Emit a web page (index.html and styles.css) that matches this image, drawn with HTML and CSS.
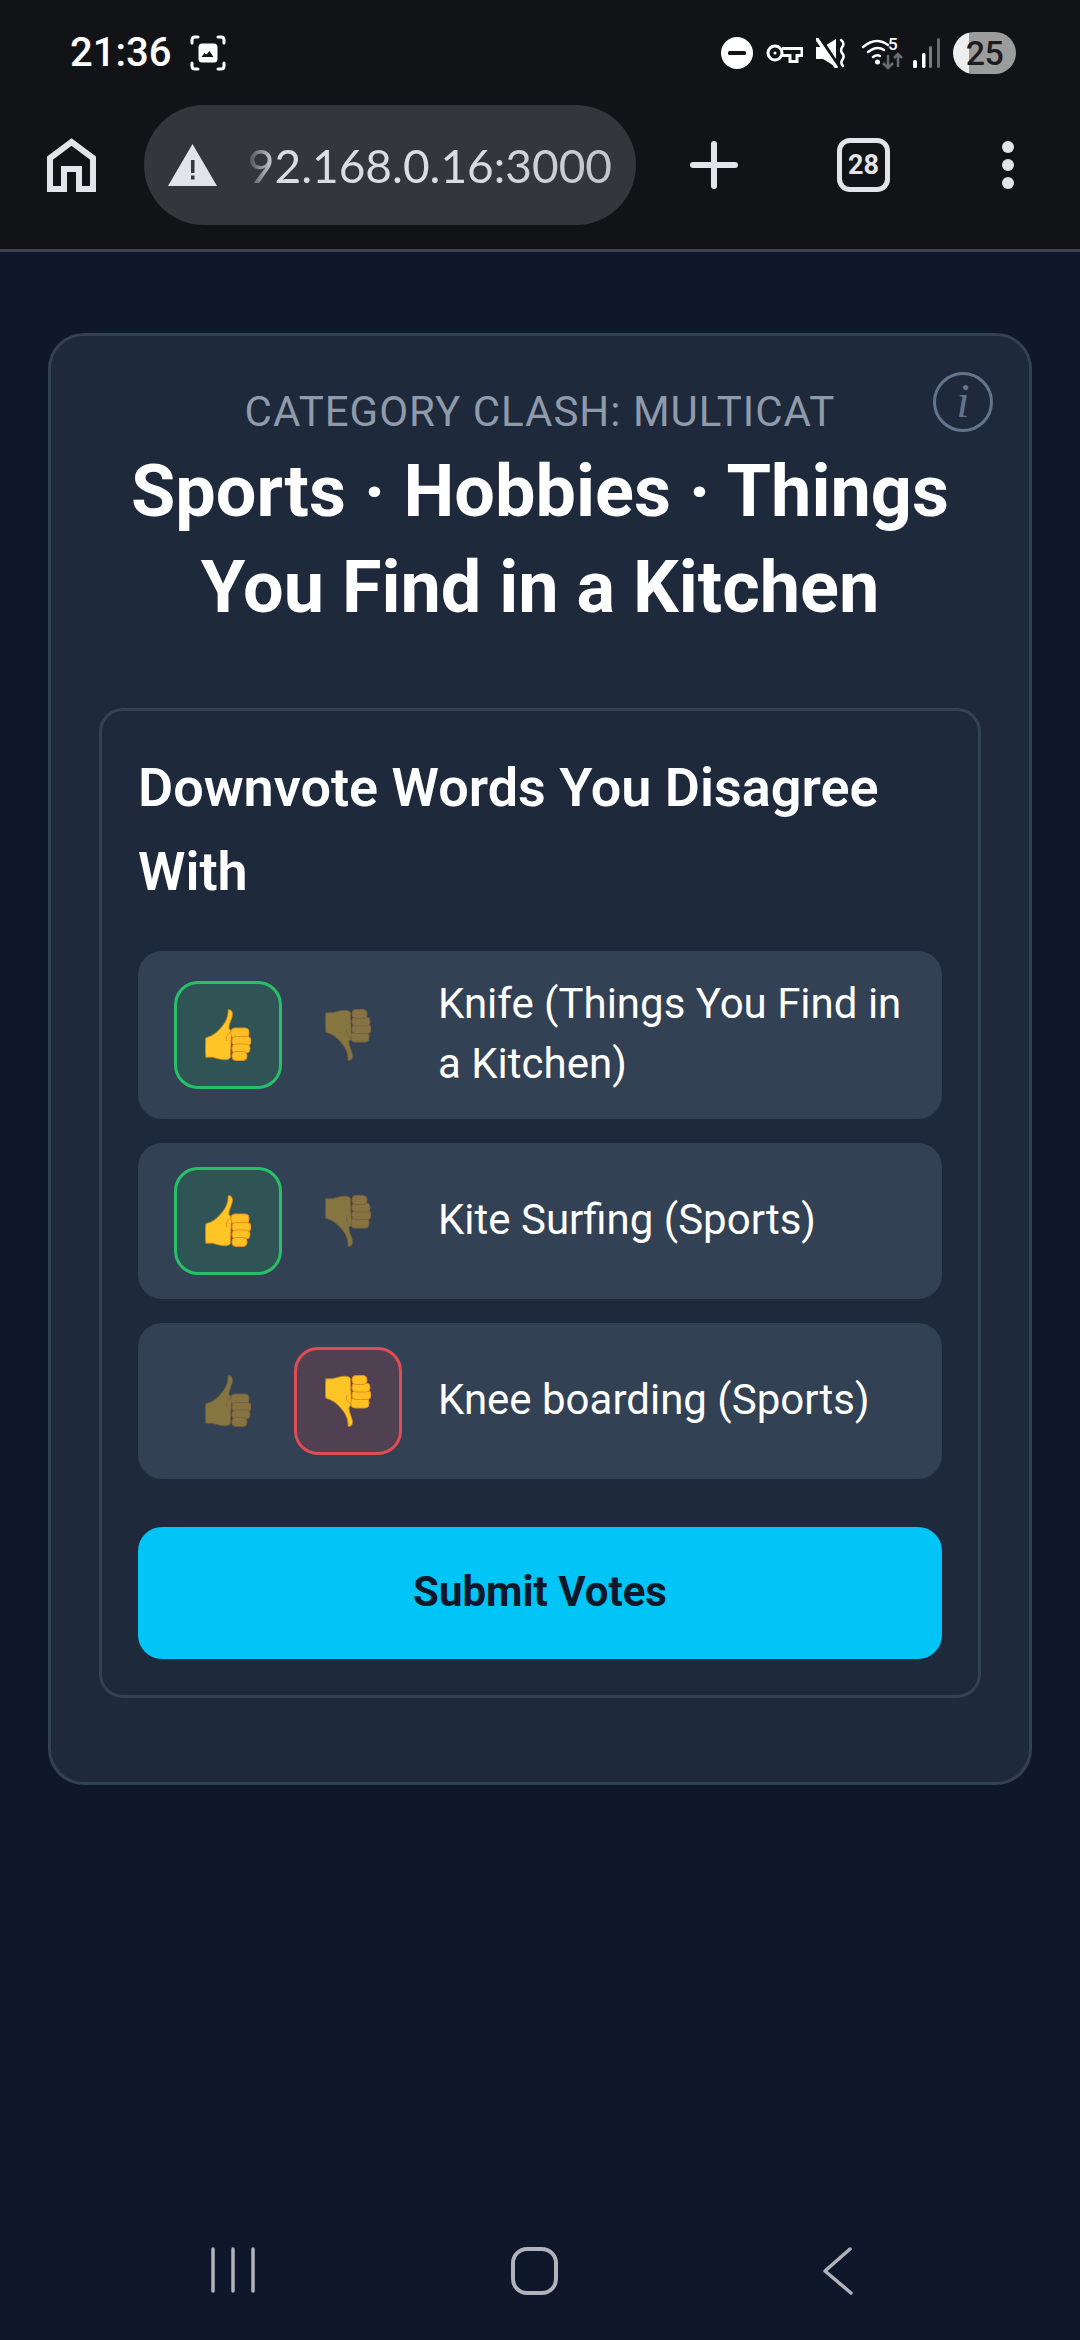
FILE: index.html
```html
<!DOCTYPE html>
<html lang="en">

<head>
    <meta charset="UTF-8" />
    <meta name="viewport" content="width=device-width, initial-scale=1.0" />
    <title>Category Clash</title>
    <link rel="stylesheet" href="styles.css">
</head>

<body>
    <svg class="defs" width="0" height="0">
        <defs>
            <symbol id="thumb" viewBox="0 0 46 52">
                <path d="M23 .8c3-.8 4.800 1.700 4.500 5-.3 3.700-3 7.600-3.500 12.200-.2 2 .5 3 2.500 3.500l-1 27c-1 1.600-3 2.300-5 2.300-5 0-11-2-13-2.500H.8C.3 44 .3 34 .8 28.800 8 27 12.500 23 16.500 18 21 13 23.500 7 23 .8z" fill="#ffc425" stroke="#c9801a" stroke-width=".8" />
                <path d="M26 22c-3 3-6 6-4 10" fill="none" stroke="#e0901c" stroke-width="1" />
                <rect x="26" y="19" width="18" height="10" rx="4" fill="#ffc024" stroke="#e58f1d" stroke-width="1" />
                <rect x="27" y="27.500" width="19" height="9" rx="4" fill="#ffc024" stroke="#e58f1d" stroke-width="1" />
                <rect x="27" y="35" width="18" height="9" rx="4" fill="#ffc024" stroke="#e58f1d" stroke-width="1" />
                <rect x="27" y="42.500" width="15" height="9" rx="4" fill="#ffc024" stroke="#e58f1d" stroke-width="1" />
            </symbol>
        </defs>
    </svg>

    <header class="chrome">
        <div class="statusbar">
            <span class="clock">21:36</span>
            <svg class="shot-icon" width="36" height="36" viewBox="0 0 36 36" fill="none" stroke="#fff" stroke-width="3" stroke-linecap="round">
                <path d="M2 8V5q0-3 3-3h3M28 2h3q3 0 3 3v3M34 28v3q0 3-3 3h-3M8 34H5q-3 0-3-3v-3" />
                <rect x="8.500" y="8.500" width="19" height="19" rx="3.500" fill="#fff" stroke="none" />
                <path d="M11.500 22l3-4 2 1.500 3-3.500 4 6z" fill="#121317" stroke="none" />
            </svg>
            <div class="status-icons">
                <svg width="32" height="32" viewBox="0 0 32 32">
                    <circle cx="16" cy="16" r="16" fill="#fff" />
                    <rect x="7" y="14" width="18" height="4" rx="1.500" fill="#121317" />
                </svg>
                <svg width="37" height="20" viewBox="0 0 37 20" fill="none" stroke="#fff" stroke-width="3">
                    <circle cx="9" cy="10" r="7" />
                    <circle cx="9" cy="10" r="1.500" fill="#fff" stroke="none" />
                    <path d="M16 5.500h20v7h-5v6h-7v-6h-8" />
                </svg>
                <svg width="30" height="30" viewBox="0 0 30 30" fill="none">
                    <path d="M0 9h7l13-8v28l-13-8H0z" fill="#fff" />
                    <path d="M3 -1l20 30" stroke="#121317" stroke-width="4" />
                    <path d="M1 1l19 28" stroke="#fff" stroke-width="3.500" stroke-linecap="round" />
                    <path d="M25 2q4 3 1.500 6.500T26 15q3 3 .5 6.500T27 28" stroke="#fff" stroke-width="2.500" stroke-linecap="round" />
                </svg>
                <svg class="wifi" width="41" height="32" viewBox="0 0 41 32" fill="none">
                    <path d="M1 10q13-11 25-2M6 15q9-7 16-2M11 20q4-3 7-1" stroke="#fff" stroke-width="2.500" stroke-linecap="round" />
                    <circle cx="15.500" cy="25" r="2.500" fill="#fff" />
                    <text class="wifi-five" x="26" y="13">5</text>
                    <path d="M26 18v13M21 26l5 5 5-5" stroke="#6a6b70" stroke-width="2.500" />
                    <path d="M36 30V17M32 21l4-4 4 4" stroke="#6a6b70" stroke-width="2.500" />
                </svg>
                <svg class="signal" width="27" height="30" viewBox="0 0 27 30">
                    <rect x="0" y="22" width="4" height="8" rx="1.500" fill="#fff" />
                    <rect x="9" y="15" width="3.500" height="15" rx="1.500" fill="#fff" />
                    <rect x="16" y="8" width="3" height="22" rx="1.500" fill="#7c7d82" />
                    <rect x="24" y="0" width="3" height="30" rx="1.500" fill="#6a6b70" />
                </svg>
                <div class="battery">25</div>
            </div>
        </div>

        <div class="toolbar">
            <svg class="home-btn" width="49" height="54" viewBox="0 0 49 54" fill="none" stroke="#e3e4e9" stroke-width="6">
                <path d="M3 51V20L24.500 4 46 20v31H32V31H17v20z" />
            </svg>
            <div class="urlbar">
                <svg width="49" height="42" viewBox="0 0 49 42">
                    <path d="M24.500 0L49 42H0z" fill="#e3e4e9" />
                    <rect x="23" y="16" width="3.500" height="13" fill="#35363b" />
                    <rect x="23" y="31.500" width="3.500" height="4" fill="#35363b" />
                </svg>
                <div class="url">92.168.0.16:3000</div>
            </div>
            <svg class="plus-btn" width="48" height="48" viewBox="0 0 48 48" stroke="#e3e4e9" stroke-width="6" stroke-linecap="round">
                <path d="M24 3v42M3 24h42" />
            </svg>
            <div class="tabs-btn">28</div>
            <div class="menu-btn"><i></i><i></i><i></i></div>
        </div>
    </header>

    <main class="page">
        <section class="card">
            <span class="info-btn">i</span>
            <p class="game-label">CATEGORY CLASH: MULTICAT</p>
            <h1 class="game-title">Sports · Hobbies · Things You Find in a Kitchen</h1>

            <div class="panel">
                <h2>Downvote Words You Disagree With</h2>

                <div class="word-row">
                    <button class="vote up-on"><svg class="thumb"><use href="#thumb" /></svg></button>
                    <button class="vote off"><svg class="thumb flip"><use href="#thumb" /></svg></button>
                    <span class="word">Knife (Things You Find in a Kitchen)</span>
                </div>
                <div class="word-row">
                    <button class="vote up-on"><svg class="thumb"><use href="#thumb" /></svg></button>
                    <button class="vote off"><svg class="thumb flip"><use href="#thumb" /></svg></button>
                    <span class="word">Kite Surfing (Sports)</span>
                </div>
                <div class="word-row">
                    <button class="vote off"><svg class="thumb"><use href="#thumb" /></svg></button>
                    <button class="vote down-on"><svg class="thumb flip"><use href="#thumb" /></svg></button>
                    <span class="word">Knee boarding (Sports)</span>
                </div>

                <button class="submit">Submit Votes</button>
            </div>
        </section>
    </main>

    <nav class="navbar">
        <svg width="44" height="46" viewBox="0 0 44 46" stroke="#b0b3bb" stroke-width="3.500" stroke-linecap="round">
            <path d="M2 2v42M22 2v42M42 2v42" />
        </svg>
        <svg class="nav-home" width="47" height="48" viewBox="0 0 47 48" fill="none" stroke="#b0b3bb" stroke-width="4">
            <rect x="2" y="2" width="43" height="44" rx="14" />
        </svg>
        <svg class="nav-back" width="30" height="48" viewBox="0 0 30 48" fill="none" stroke="#b0b3bb" stroke-width="3.500" stroke-linecap="round" stroke-linejoin="round">
            <path d="M27 2L2 24l26 22" />
        </svg>
    </nav>
</body>

</html>
```

FILE: styles.css
```css
* {
    box-sizing: border-box;
}

html,
body {
    margin: 0;
    padding: 0;
}

body {
    width: 1080px;
    height: 2340px;
    display: flex;
    flex-direction: column;
    background-color: #0f172a;
    color: #fff;
    font-family: Roboto, sans-serif;
    overflow: hidden;
}

.defs {
    display: block;
    height: 0;
}

/* browser chrome */
.chrome {
    height: 252px;
    flex-shrink: 0;
    background-color: #121317;
    border-bottom: 3px solid #42444e;
}

.statusbar {
    height: 105px;
    display: flex;
    align-items: center;
    padding: 0 64px 0 70px;
}

.clock {
    font-size: 40px;
    font-weight: 500;
}

.shot-icon {
    margin-left: 19px;
}

.status-icons {
    margin-left: auto;
    display: flex;
    align-items: center;
    gap: 13px;
}

.wifi {
    margin: 0 -3px 0 3px;
    overflow: visible;
}

.wifi-five {
    font-family: Roboto, sans-serif;
    font-size: 17px;
    font-weight: 500;
    fill: #fff;
}

.battery {
    width: 63px;
    height: 42px;
    border-radius: 21px;
    background: linear-gradient(90deg, #eeeeee 16px, #9c9c9c 16px);
    color: #1c1c1f;
    font-size: 34px;
    font-weight: 500;
    letter-spacing: -0.5px;
    line-height: 42px;
    text-align: center;
}

.toolbar {
    height: 120px;
    display: flex;
    align-items: center;
    padding-left: 47px;
}

.urlbar {
    width: 492px;
    height: 120px;
    margin-left: 48px;
    padding: 0 24px 0 24px;
    display: flex;
    align-items: center;
    justify-content: space-between;
    background-color: #35363b;
    border-radius: 60px;
}

.url {
    color: #dcdde1;
    font-family: Lato, sans-serif;
    font-size: 46px;
    -webkit-mask-image: linear-gradient(90deg, rgba(0, 0, 0, 0.15) 0, #000 28px, #000 60%, rgba(0, 0, 0, 0.85));
    mask-image: linear-gradient(90deg, rgba(0, 0, 0, 0.15) 0, #000 28px, #000 60%, rgba(0, 0, 0, 0.85));
}

.plus-btn {
    margin-left: 54px;
}

.tabs-btn {
    width: 53px;
    height: 54px;
    margin-left: 99px;
    border: 5px solid #e3e4e9;
    border-radius: 13px;
    color: #e3e4e9;
    font-size: 27px;
    font-weight: 700;
    line-height: 44px;
    text-align: center;
}

.menu-btn {
    margin-left: 112px;
    display: flex;
    flex-direction: column;
    gap: 6px;
}

.menu-btn i {
    width: 12px;
    height: 12px;
    border-radius: 50%;
    background-color: #e3e4e9;
}

/* game */
.page {
    flex: 1;
    padding: 81px 48px 0;
}

.card {
    position: relative;
    height: 1452px;
    padding: 48px;
    background-color: #1e293b;
    border: 3px solid #334155;
    border-radius: 36px;
}

.info-btn {
    position: absolute;
    top: 36px;
    right: 36px;
    width: 60px;
    height: 60px;
    border: 3px solid #64748b;
    border-radius: 50%;
    color: #64748b;
    font-family: "Liberation Serif", serif;
    font-size: 48px;
    font-style: italic;
    line-height: 52px;
    text-align: center;
}

.game-label {
    margin: 0;
    color: #8f9bab;
    font-size: 42px;
    line-height: 56px;
    letter-spacing: 1px;
    text-align: center;
}

.game-title {
    margin: 4px 0 72px;
    font-size: 72px;
    font-weight: 700;
    line-height: 96px;
    text-align: center;
}

.panel {
    padding: 36px;
    border: 3px solid #334155;
    border-radius: 24px;
}

.panel h2 {
    margin: -1px 0 37px;
    font-size: 54px;
    font-weight: 600;
    line-height: 84px;
}

.word-row {
    display: flex;
    align-items: center;
    margin-top: 24px;
    padding: 24px 36px;
    background-color: #334155;
    border-radius: 24px;
}

.panel h2 + .word-row {
    margin-top: 0;
}

.vote {
    width: 108px;
    height: 108px;
    flex-shrink: 0;
    margin-right: 12px;
    padding: 0;
    display: flex;
    align-items: center;
    justify-content: center;
    background: none;
    border: 3px solid transparent;
    border-radius: 24px;
}

.vote.up-on {
    background-color: rgba(34, 197, 94, 0.15);
    border-color: #27c069;
}

.vote.down-on {
    background-color: rgba(239, 68, 68, 0.15);
    border-color: #dd4d53;
}

.vote.off .thumb {
    opacity: 0.4;
}

.thumb {
    width: 46px;
    height: 52px;
}

.thumb.flip {
    transform: scaleY(-1);
}

.word {
    margin: -1px 0 1px 24px;
    font-size: 42px;
    line-height: 60px;
}

.submit {
    display: block;
    width: 100%;
    height: 132px;
    margin-top: 48px;
    padding: 0 0 4px;
    background-color: #00c5f6;
    border: none;
    border-radius: 24px;
    color: #0f172a;
    font-family: Roboto, sans-serif;
    font-size: 42px;
    font-weight: 700;
}

.navbar {
    height: 140px;
    flex-shrink: 0;
    display: flex;
    align-items: flex-start;
    padding: 47px 0 0 211px;
}

.nav-home {
    margin-left: 256px;
}

.nav-back {
    margin-left: 265px;
}
```
